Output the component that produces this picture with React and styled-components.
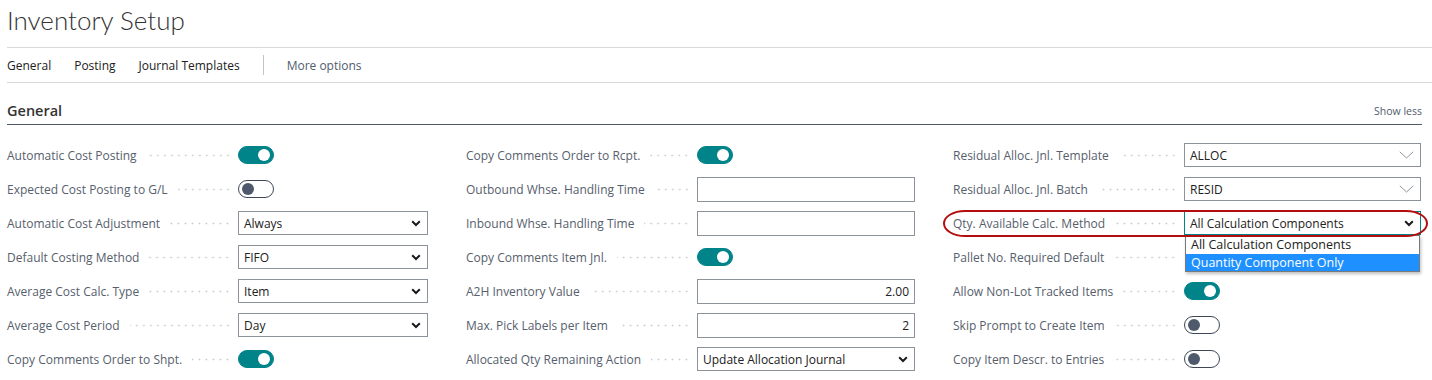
import React from 'react'
import styled, { createGlobalStyle } from 'styled-components'

const GlobalStyle = createGlobalStyle`
  body {
    margin: 0;
    background: #ffffff;
    font-family: 'Segoe UI', 'Open Sans', 'Liberation Sans', sans-serif;
  }
`

const columns = [
  [
    { label: 'Automatic Cost Posting', type: 'toggle', on: true },
    { label: 'Expected Cost Posting to G/L', type: 'toggle', on: false },
    { label: 'Automatic Cost Adjustment', type: 'select', value: 'Always' },
    { label: 'Default Costing Method', type: 'select', value: 'FIFO' },
    { label: 'Average Cost Calc. Type', type: 'select', value: 'Item' },
    { label: 'Average Cost Period', type: 'select', value: 'Day' },
    { label: 'Copy Comments Order to Shpt.', type: 'toggle', on: true },
  ],
  [
    { label: 'Copy Comments Order to Rcpt.', type: 'toggle', on: true },
    { label: 'Outbound Whse. Handling Time', type: 'input', value: '' },
    { label: 'Inbound Whse. Handling Time', type: 'input', value: '' },
    { label: 'Copy Comments Item Jnl.', type: 'toggle', on: true },
    { label: 'A2H Inventory Value', type: 'input', value: '2.00', numeric: true },
    { label: 'Max. Pick Labels per Item', type: 'input', value: '2', numeric: true },
    { label: 'Allocated Qty Remaining Action', type: 'select', value: 'Update Allocation Journal' },
  ],
  [
    { label: 'Residual Alloc. Jnl. Template', type: 'lookup', value: 'ALLOC' },
    { label: 'Residual Alloc. Jnl. Batch', type: 'lookup', value: 'RESID' },
    {
      label: 'Qty. Available Calc. Method',
      type: 'select',
      value: 'All Calculation Components',
      open: true,
      options: ['All Calculation Components', 'Quantity Component Only'],
      highlighted: 1,
    },
    { label: 'Pallet No. Required Default', type: 'toggle', on: false, hidden: true },
    { label: 'Allow Non-Lot Tracked Items', type: 'toggle', on: true },
    { label: 'Skip Prompt to Create Item', type: 'toggle', on: false },
    { label: 'Copy Item Descr. to Entries', type: 'toggle', on: false },
  ],
]

const BoldChevron = () => (
  <svg width='10' height='7' viewBox='0 0 10 7'>
    <path d='M1.2 1.3 L5 5 L8.8 1.3' fill='none' stroke='#1a1a1a' strokeWidth='2' />
  </svg>
)

const ThinChevron = () => (
  <svg width='15' height='8' viewBox='0 0 15 8'>
    <path d='M0.8 0.8 L7.5 7 L14.2 0.8' fill='none' stroke='#8f949a' strokeWidth='1' />
  </svg>
)

const Field = ({ field }) => {
  let control = null
  if (field.type === 'toggle') {
    control = field.hidden ? null : (
      <Toggle $on={field.on}>
        <Knob $on={field.on} />
      </Toggle>
    )
  } else if (field.type === 'input') {
    control = <TextBox $numeric={field.numeric}>{field.value}</TextBox>
  } else if (field.type === 'lookup') {
    control = (
      <SelectBox>
        <span>{field.value}</span>
        <ThinChevron />
      </SelectBox>
    )
  } else {
    control = (
      <SelectBox $focused={field.open}>
        <span>{field.value}</span>
        <BoldChevron />
        {field.open && (
          <DropList>
            {field.options.map((option, i) => (
              <DropItem key={option} $active={i === field.highlighted}>
                {option}
              </DropItem>
            ))}
          </DropList>
        )}
      </SelectBox>
    )
  }

  return (
    <Row>
      <LabelCell>
        <Label>{field.label}</Label>
        <Leader />
      </LabelCell>
      <ControlCell>{control}</ControlCell>
      {field.open && <Ring />}
    </Row>
  )
}

const App = () => {
  return (
    <Page>
      <GlobalStyle />
      <Title>Inventory Setup</Title>
      <Tabs>
        <Tab>General</Tab>
        <Tab>Posting</Tab>
        <Tab>Journal Templates</Tab>
        <Divider />
        <Tab $muted>More options</Tab>
      </Tabs>
      <Section>
        <SectionHeader>
          <SectionTitle>General</SectionTitle>
          <ShowLess>Show less</ShowLess>
        </SectionHeader>
        <FieldGrid>
          {columns.map((col, ci) => (
            <Column key={ci}>
              {col.map((field) => (
                <Field key={field.label} field={field} />
              ))}
            </Column>
          ))}
        </FieldGrid>
      </Section>
    </Page>
  )
}

export default App

const Page = styled.div`
  width: 1432px;
  height: 380px;
  overflow: hidden;
  padding-left: 7px;
  box-sizing: border-box;
`

const Title = styled.div`
  height: 48px;
  box-sizing: border-box;
  display: flex;
  align-items: center;
  padding-bottom: 7px;
  font-family: 'Lato', 'Open Sans', sans-serif;
  font-size: 26px;
  font-weight: 300;
  color: #333333;
  border-bottom: 1px solid #d9d9d9;
`

const Tabs = styled.div`
  height: 35px;
  box-sizing: border-box;
  display: flex;
  align-items: center;
  gap: 23px;
  border-bottom: 1px solid #d9d9d9;
`

const Tab = styled.div`
  font-size: 12px;
  color: ${(p) => (p.$muted ? '#505c6d' : '#212121')};
`

const Divider = styled.div`
  width: 1px;
  height: 20px;
  background: #c4c4c4;
`

const Section = styled.div`
  padding-right: 10px;
`

const SectionHeader = styled.div`
  height: 42px;
  box-sizing: border-box;
  display: flex;
  align-items: flex-end;
  justify-content: space-between;
  padding-bottom: 4px;
  border-bottom: 1px solid #4f5b68;
`

const SectionTitle = styled.div`
  font-size: 14.5px;
  font-weight: 600;
  color: #333333;
`

const ShowLess = styled.div`
  font-size: 10.5px;
  color: #505c6d;
  margin-bottom: 2px;
`

const FieldGrid = styled.div`
  display: grid;
  grid-template-columns: 421px 449px 468px;
  column-gap: 38px;
  padding-top: 13px;
`

const Column = styled.div`
  display: flex;
  flex-direction: column;
`

const Row = styled.div`
  position: relative;
  height: 34px;
  display: flex;
  align-items: center;
`

const LabelCell = styled.div`
  width: 231px;
  flex-shrink: 0;
  display: flex;
  align-items: center;
`

const Label = styled.div`
  font-size: 12px;
  color: #56606c;
  white-space: nowrap;
`

const Leader = styled.div`
  flex: 1;
  height: 3px;
  margin: 1px 7px 0 10px;
  background-image: radial-gradient(circle, #c3c7cc 0.8px, transparent 1.1px);
  background-size: 7px 3px;
  background-repeat: repeat-x;
  background-position: right center;
`

const ControlCell = styled.div`
  flex: 1;
  display: flex;
  align-items: center;
`

const Toggle = styled.div`
  width: 36px;
  height: 18px;
  border-radius: 9px;
  box-sizing: border-box;
  display: flex;
  align-items: center;
  padding: 0 3px;
  justify-content: ${(p) => (p.$on ? 'flex-end' : 'flex-start')};
  background: ${(p) => (p.$on ? '#00848a' : '#ffffff')};
  border: 1px solid ${(p) => (p.$on ? '#00848a' : '#3d4756')};
`

const Knob = styled.div`
  width: 12px;
  height: 12px;
  border-radius: 50%;
  background: ${(p) => (p.$on ? '#ffffff' : '#4e5a6b')};
`

const TextBox = styled.div`
  flex: 1;
  height: 25px;
  box-sizing: border-box;
  border: 1px solid #8d939b;
  display: flex;
  align-items: center;
  justify-content: ${(p) => (p.$numeric ? 'flex-end' : 'flex-start')};
  padding: 0 5px;
  font-size: 12px;
  color: #212121;
`

const SelectBox = styled.div`
  position: relative;
  flex: 1;
  height: 24px;
  box-sizing: border-box;
  border: 1px solid ${(p) => (p.$focused ? '#00848a' : '#8d939b')};
  display: flex;
  align-items: center;
  justify-content: space-between;
  padding: 0 6px 0 5px;
  font-size: 12px;
  color: #212121;
`

const DropList = styled.div`
  position: absolute;
  top: 100%;
  left: 0;
  right: 0;
  margin-top: 1px;
  background: #ffffff;
  border: 1px solid #7a7a7a;
  box-shadow: 1px 2px 3px rgba(0, 0, 0, 0.25);
  z-index: 5;
`

const DropItem = styled.div`
  height: 17.5px;
  display: flex;
  align-items: center;
  padding: 0 5px;
  font-size: 12.5px;
  color: ${(p) => (p.$active ? '#ffffff' : '#212121')};
  background: ${(p) => (p.$active ? '#1e90ff' : 'transparent')};
`

// red annotation oval drawn over the focused row
const Ring = styled.div`
  position: absolute;
  left: -10px;
  right: -7px;
  top: 4px;
  height: 27px;
  box-sizing: border-box;
  border: 2.5px solid #b50d0d;
  border-radius: 22px / 50%;
  pointer-events: none;
  z-index: 6;
`
